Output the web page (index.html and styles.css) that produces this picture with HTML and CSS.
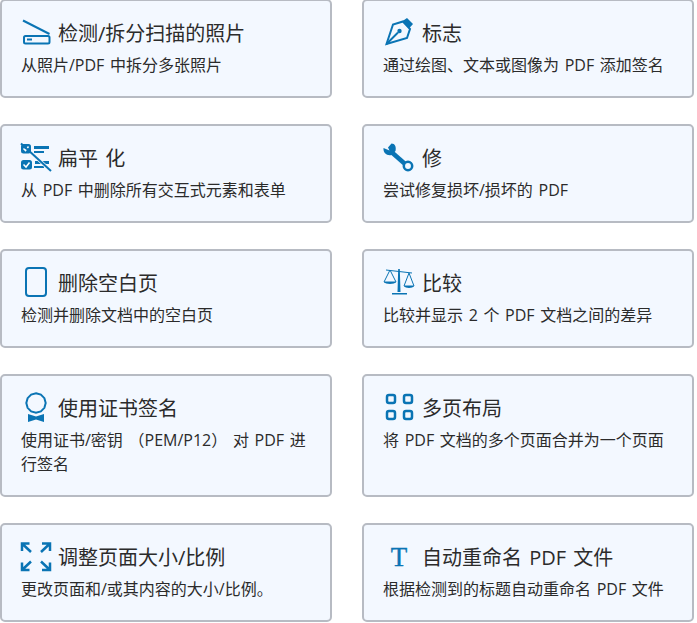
FILE: index.html
```html
<!DOCTYPE html>
<html lang="zh-CN">
<head>
    <meta charset="UTF-8">
    <meta name="viewport" content="width=device-width, initial-scale=1.0">
    <title>PDF 工具</title>
    <link rel="stylesheet" href="styles.css">
</head>
<body>
    <div class="tool-grid">
        <div class="tool-card">
            <div class="tool-head">
                <svg class="tool-icon" viewBox="0 0 30 30">
                    <path class="line" d="M3 2.5 29.5 16"/>
                    <rect class="line" x="4" y="18" width="25.5" height="7.5" rx="1.5"/>
                    <path class="line" d="M7 21.5h5"/>
                </svg>
                <h3>检测/拆分扫描的照片</h3>
            </div>
            <p>从照片/PDF 中拆分多张照片</p>
        </div>
        <div class="tool-card">
            <div class="tool-head">
                <svg class="tool-icon" viewBox="0 0 30 30">
                    <path class="line" d="M4.5 26 11 6.5 21 3.5 28 11 25 20Z"/>
                    <path class="solid" d="M20 3.5 25 0 31 6 27 10.5Z"/>
                    <path class="line" d="M4.5 26 16 14.5"/>
                    <circle class="solid" cx="17.5" cy="13" r="2.2"/>
                </svg>
                <h3>标志</h3>
            </div>
            <p>通过绘图、文本或图像为 PDF 添加签名</p>
        </div>
        <div class="tool-card">
            <div class="tool-head">
                <svg class="tool-icon" viewBox="0 0 30 30">
                    <rect class="solid" x="1" y="1" width="10" height="9.500" rx="2.500"/>
                    <rect class="solid" x="1" y="17" width="11" height="9.500" rx="2.500"/>
                    <path class="check" d="M3.500 5.500 5.500 7.500 8.500 3.500M3.500 21.500 6 24 9.500 19.500"/>
                    <path class="solid" d="M14 3h15v3H14zM14 8h10v2H14zM15 18h14v3H15zM14 23h10v2H14z"/>
                    <path class="halo" d="M13 11.500 31 28"/>
                    <path class="line" d="M1 .5 31 28"/>
                </svg>
                <h3>扁平 化</h3>
            </div>
            <p>从 PDF 中删除所有交互式元素和表单</p>
        </div>
        <div class="tool-card">
            <div class="tool-head">
                <svg class="tool-icon" viewBox="0 0 30 30">
                    <path class="solid" d="M9.500 .5 6 4.500 7.500 7.500 1.500 5C1 10 5 13 9.500 12L13.500 8C14.500 4 13 .5 9.500 .5Z"/>
                    <path class="line thick" d="M10 9.500 22.500 20.500"/>
                    <circle class="line wide" cx="26" cy="23" r="4.200"/>
                </svg>
                <h3>修</h3>
            </div>
            <p>尝试修复损坏/损坏的 PDF</p>
        </div>
        <div class="tool-card">
            <div class="tool-head">
                <svg class="tool-icon" viewBox="0 0 30 30">
                    <rect class="line" x="6" y="0" width="20" height="28" rx="3"/>
                </svg>
                <h3>删除空白页</h3>
            </div>
            <p>检测并删除文档中的空白页</p>
        </div>
        <div class="tool-card">
            <div class="tool-head">
                <svg class="tool-icon" viewBox="0 0 30 30">
                    <path class="solid" d="M16.200 1h1.600l.7 23h-3zM10 25h15v1.500H10z"/>
                    <path class="thin" d="M4 2 30 5M8 2 2 14H14ZM27 5 22 18H32Z"/>
                    <path class="solid" d="M2 14H14C13 16.500 3 16.500 2 14ZM22 18H32C31 20.500 23 20.500 22 18Z"/>
                </svg>
                <h3>比较</h3>
            </div>
            <p>比较并显示 2 个 PDF 文档之间的差异</p>
        </div>
        <div class="tool-card">
            <div class="tool-head">
                <svg class="tool-icon" viewBox="0 0 30 30">
                    <path class="line" d="M16 .3 20.850 1.600 24.400 5.150 25.700 10 24.400 14.850 20.850 18.400 16 19.700 11.150 18.400 7.600 14.850 6.300 10 7.600 5.150 11.150 1.600Z"/>
                    <path class="solid" d="M8 21 16 23.500 24 21V29L16 26.500 8 29Z"/>
                </svg>
                <h3>使用证书签名</h3>
            </div>
            <p>使用证书/密钥 （PEM/P12） 对 PDF 进行签名</p>
        </div>
        <div class="tool-card">
            <div class="tool-head">
                <svg class="tool-icon" viewBox="0 0 30 30">
                    <rect class="line wide" x="5" y="2" width="8" height="8" rx="2"/>
                    <rect class="line wide" x="22" y="2" width="8" height="8" rx="2"/>
                    <rect class="line wide" x="5" y="18" width="8" height="8" rx="2"/>
                    <rect class="line wide" x="22" y="18" width="8" height="8" rx="2"/>
                </svg>
                <h3>多页布局</h3>
            </div>
            <p>将 PDF 文档的多个页面合并为一个页面</p>
        </div>
        <div class="tool-card">
            <div class="tool-head">
                <svg class="tool-icon" viewBox="0 0 30 30">
                    <path class="line wide" d="M2 9V1.500H9.500M2 1.500 11 10"/>
                    <path class="line wide" d="M22 1.500H30V9M30 1.500 21 10"/>
                    <path class="line wide" d="M2 20.500V28H9.500M2 28 11 19.500"/>
                    <path class="line wide" d="M22 28H30V20.500M30 28 21 19.500"/>
                </svg>
                <h3>调整页面大小/比例</h3>
            </div>
            <p>更改页面和/或其内容的大小/比例。</p>
        </div>
        <div class="tool-card">
            <div class="tool-head">
                <span class="tool-icon letter-icon">T</span>
                <h3>自动重命名 PDF 文件</h3>
            </div>
            <p>根据检测到的标题自动重命名 PDF 文件</p>
        </div>
    </div>
</body>
</html>
```

FILE: styles.css
```css
body {
    font-family: "Open Sans", "Noto Sans CJK SC", sans-serif;
    margin: 0;
    padding: 0;
    background-color: #fff;
    color: #2b2b2b;
}

.tool-grid {
    display: grid;
    grid-template-columns: 332px 332px;
    column-gap: 30px;
    row-gap: 26px;
    margin-top: -1px;
}

.tool-card {
    padding: 17px 19px 19px;
    background-color: #f3f8ff;
    border: 2px solid #b7bbc3;
    border-radius: 5px;
}

.tool-head {
    display: flex;
    align-items: center;
    gap: 8px;
    height: 30px;
    margin-bottom: 5px;
    margin-left: -1px;
}
.tool-card:nth-child(even) .tool-head {
    gap: 10px;
}
.tool-head h3 {
    margin: 0;
    padding-top: 2px;
    font-size: 20px;
    font-weight: 400;
    line-height: 30px;
    word-spacing: 2px;
}

.tool-card p {
    margin: 0;
    font-size: 16px;
    line-height: 24px;
    word-spacing: 1.5px;
}

.tool-icon {
    flex: none;
    width: 30px;
    height: 30px;
    overflow: visible;
}
.tool-icon .line {
    fill: none;
    stroke: #0a74b4;
    stroke-width: 2;
}
.tool-icon .line.wide {
    stroke-width: 2.5;
}
.tool-icon .line.thick {
    stroke-width: 4.5;
}
.tool-icon .thin {
    fill: none;
    stroke: #0a74b4;
    stroke-width: 1;
}
.tool-icon .solid {
    fill: #0a74b4;
}
.tool-icon .check {
    fill: none;
    stroke: #fff;
    stroke-width: 1.5;
}
.tool-icon .halo {
    fill: none;
    stroke: #f3f8ff;
    stroke-width: 3.5;
}

.letter-icon {
    padding-left: 4px;
    box-sizing: border-box;
    font-family: "Liberation Serif", serif;
    font-size: 27px;
    line-height: 30px;
    text-align: center;
    color: #0a74b4;
    -webkit-text-stroke: 0.4px #0a74b4;
}
```
